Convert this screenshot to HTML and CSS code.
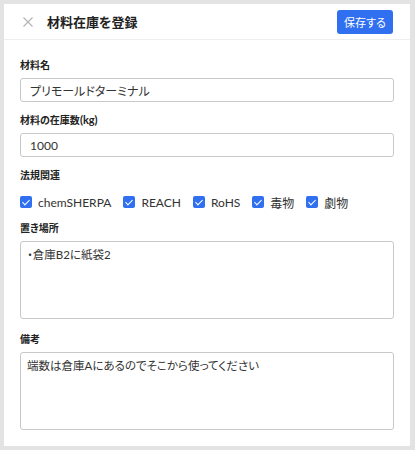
FILE: index.html
```html
<!DOCTYPE html>
<html lang="ja">
<head>
  <meta charset="UTF-8" />
  <meta name="viewport" content="width=device-width, initial-scale=1.0" />
  <title>材料在庫を登録</title>
  <link rel="stylesheet" href="styles.css">
</head>
<body>
  <div class="modal">
    <div class="modal-header">
      <button class="close" aria-label="閉じる">
        <svg width="10" height="10" viewBox="0 0 10 10">
          <path d="M0.5 0.5 L9.5 9.5 M9.5 0.5 L0.5 9.5" stroke="#b5b5b5" stroke-width="1.2" fill="none" />
        </svg>
      </button>
      <h1 class="title">材料在庫を登録</h1>
      <button class="save">保存する</button>
    </div>

    <form class="form">
      <div class="field">
        <label>材料名</label>
        <input type="text" class="input" value="プリモールドターミナル" />
      </div>

      <div class="field">
        <label>材料の在庫数<span class="unit">(kg)</span></label>
        <input type="text" class="input" value="1000" />
      </div>

      <div class="field field-checks">
        <label>法規関連</label>
        <div class="checks">
          <span class="check"><span class="box"></span>chemSHERPA</span>
          <span class="check"><span class="box"></span>REACH</span>
          <span class="check"><span class="box"></span>RoHS</span>
          <span class="check"><span class="box"></span>毒物</span>
          <span class="check"><span class="box"></span>劇物</span>
        </div>
      </div>

      <div class="field field-wide">
        <label>置き場所</label>
        <textarea class="textarea">・倉庫B2に紙袋2</textarea>
      </div>

      <div class="field">
        <label>備考</label>
        <textarea class="textarea">端数は倉庫Aにあるのでそこから使ってください</textarea>
      </div>
    </form>
  </div>
</body>
</html>
```

FILE: styles.css
```css
* {
  margin: 0;
  padding: 0;
  box-sizing: border-box;
  font-family: "Lato", "Noto Sans CJK JP", sans-serif;
  font-feature-settings: "palt";
}
body {
  background: #e3e3e3;
  padding: 4px 5px 4px 4px;
}
.modal {
  background: #fff;
  height: 442px;
}
.modal-header {
  height: 36px;
  display: flex;
  align-items: center;
  border-bottom: 1px solid #eeeeee;
  padding: 0 17px 0 19px;
}
.close {
  border: none;
  background: none;
  width: 10px;
  height: 10px;
  display: flex;
  margin-right: 14px;
}
.title {
  font-size: 13px;
  font-weight: bold;
  color: #222;
  flex: 1;
}
.save {
  width: 56px;
  height: 24px;
  border: none;
  border-radius: 3px;
  background: #2f6ff0;
  color: #fff;
  font-size: 11px;
}
.form {
  padding: 17px 16px 0;
}
.field {
  margin-bottom: 10px;
}
.field-checks {
  margin-bottom: 9px;
}
.field-wide {
  margin-bottom: 12px;
}
.field label {
  display: block;
  font-size: 10px;
  font-weight: bold;
  line-height: 16px;
  margin-bottom: 5px;
  color: #222;
}
.unit {
  font-size: 11px;
}
.input {
  width: 100%;
  height: 24px;
  border: 1px solid #c8c8c8;
  border-radius: 3px;
  padding: 0 9px;
  font-size: 12px;
  color: #333;
  outline: none;
}
.textarea {
  display: block;
  width: 100%;
  height: 78px;
  border: 1px solid #c8c8c8;
  border-radius: 3px;
  padding: 5px 6px;
  font-size: 11.5px;
  line-height: 16px;
  color: #333;
  resize: none;
  outline: none;
}
.checks {
  display: flex;
  gap: 12px;
  margin-top: 10px;
  height: 18px;
  align-items: center;
}
.check {
  display: flex;
  align-items: center;
  gap: 6px;
  font-size: 12px;
  color: #333;
}
.box {
  width: 12px;
  height: 12px;
  border-radius: 2px;
  background: #2f6ff0;
  position: relative;
}
.box::after {
  content: "";
  position: absolute;
  left: 4px;
  top: 1.5px;
  width: 3px;
  height: 6px;
  border: solid #fff;
  border-width: 0 1.5px 1.5px 0;
  transform: rotate(45deg);
}
```
